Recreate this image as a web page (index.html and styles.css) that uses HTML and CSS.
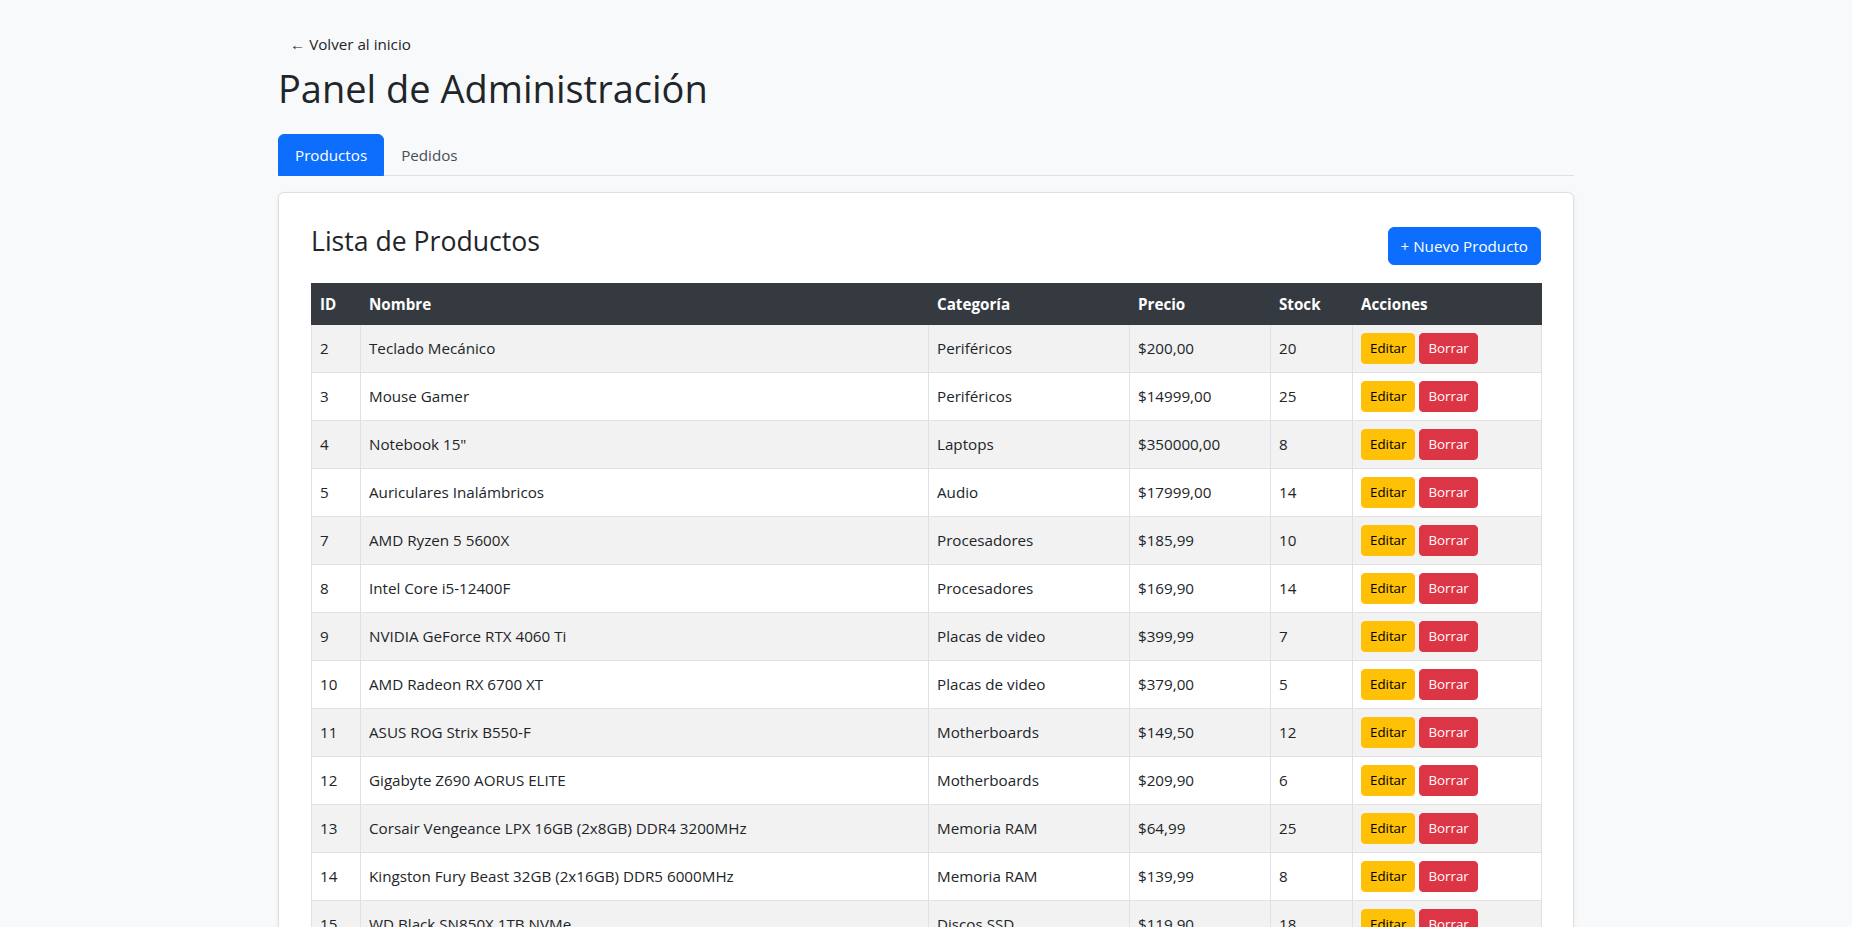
FILE: index.html
```html
<!DOCTYPE html>
<html lang="es">
<head>
<meta charset="utf-8">
<title>Panel de Administración</title>
<link rel="stylesheet" href="styles.css">
</head>
<body>
<div class="container">
  <a class="back-link" href="#">← Volver al inicio</a>
  <h1 class="page-title">Panel de Administración</h1>

  <ul class="tabs">
    <li><a class="tab active" href="#">Productos</a></li>
    <li><a class="tab" href="#">Pedidos</a></li>
  </ul>

  <div class="card">
    <div class="card-head">
      <h3 class="card-title">Lista de Productos</h3>
      <button class="btn btn-primary">+ Nuevo Producto</button>
    </div>

    <table class="table">
      <colgroup>
        <col class="c-id"><col class="c-name"><col class="c-cat"><col class="c-price"><col class="c-stock"><col class="c-act">
      </colgroup>
      <thead>
        <tr><th>ID</th><th>Nombre</th><th>Categoría</th><th>Precio</th><th>Stock</th><th>Acciones</th></tr>
      </thead>
      <tbody>
        <tr><td>2</td><td>Teclado Mecánico</td><td>Periféricos</td><td>$200,00</td><td>20</td><td><button class="btn-sm btn-warning">Editar</button><button class="btn-sm btn-danger">Borrar</button></td></tr>
        <tr><td>3</td><td>Mouse Gamer</td><td>Periféricos</td><td>$14999,00</td><td>25</td><td><button class="btn-sm btn-warning">Editar</button><button class="btn-sm btn-danger">Borrar</button></td></tr>
        <tr><td>4</td><td>Notebook 15"</td><td>Laptops</td><td>$350000,00</td><td>8</td><td><button class="btn-sm btn-warning">Editar</button><button class="btn-sm btn-danger">Borrar</button></td></tr>
        <tr><td>5</td><td>Auriculares Inalámbricos</td><td>Audio</td><td>$17999,00</td><td>14</td><td><button class="btn-sm btn-warning">Editar</button><button class="btn-sm btn-danger">Borrar</button></td></tr>
        <tr><td>7</td><td>AMD Ryzen 5 5600X</td><td>Procesadores</td><td>$185,99</td><td>10</td><td><button class="btn-sm btn-warning">Editar</button><button class="btn-sm btn-danger">Borrar</button></td></tr>
        <tr><td>8</td><td>Intel Core i5-12400F</td><td>Procesadores</td><td>$169,90</td><td>14</td><td><button class="btn-sm btn-warning">Editar</button><button class="btn-sm btn-danger">Borrar</button></td></tr>
        <tr><td>9</td><td>NVIDIA GeForce RTX 4060 Ti</td><td>Placas de video</td><td>$399,99</td><td>7</td><td><button class="btn-sm btn-warning">Editar</button><button class="btn-sm btn-danger">Borrar</button></td></tr>
        <tr><td>10</td><td>AMD Radeon RX 6700 XT</td><td>Placas de video</td><td>$379,00</td><td>5</td><td><button class="btn-sm btn-warning">Editar</button><button class="btn-sm btn-danger">Borrar</button></td></tr>
        <tr><td>11</td><td>ASUS ROG Strix B550-F</td><td>Motherboards</td><td>$149,50</td><td>12</td><td><button class="btn-sm btn-warning">Editar</button><button class="btn-sm btn-danger">Borrar</button></td></tr>
        <tr><td>12</td><td>Gigabyte Z690 AORUS ELITE</td><td>Motherboards</td><td>$209,90</td><td>6</td><td><button class="btn-sm btn-warning">Editar</button><button class="btn-sm btn-danger">Borrar</button></td></tr>
        <tr><td>13</td><td>Corsair Vengeance LPX 16GB (2x8GB) DDR4 3200MHz</td><td>Memoria RAM</td><td>$64,99</td><td>25</td><td><button class="btn-sm btn-warning">Editar</button><button class="btn-sm btn-danger">Borrar</button></td></tr>
        <tr><td>14</td><td>Kingston Fury Beast 32GB (2x16GB) DDR5 6000MHz</td><td>Memoria RAM</td><td>$139,99</td><td>8</td><td><button class="btn-sm btn-warning">Editar</button><button class="btn-sm btn-danger">Borrar</button></td></tr>
        <tr><td>15</td><td>WD Black SN850X 1TB NVMe</td><td>Discos SSD</td><td>$119,90</td><td>18</td><td><button class="btn-sm btn-warning">Editar</button><button class="btn-sm btn-danger">Borrar</button></td></tr>
      </tbody>
    </table>
  </div>
</div>
</body>
</html>
```

FILE: styles.css
```css
* { box-sizing: border-box; }

html, body {
  margin: 0;
  background: #f8f9fa;
  color: #212529;
  font-family: "Open Sans", "Noto Sans", "Liberation Sans", sans-serif;
  font-size: 15.2px;
  line-height: 24px;
}

.container {
  max-width: 1320px;
  margin: 0 auto;
  padding: 26px 12px 40px;
}

.back-link {
  display: inline-block;
  padding: 6px 12px;
  line-height: 24px;
  color: #212529;
  text-decoration: none;
  margin-bottom: 2px;
}

.page-title {
  margin: 0 0 22px;
  font-size: 38px;
  line-height: 48px;
  font-weight: 400;
  color: #212529;
}

.tabs {
  display: flex;
  list-style: none;
  margin: 0 0 16px;
  padding: 0;
  border-bottom: 1px solid #dee2e6;
}

.tab {
  display: block;
  padding: 8px 16px;
  margin-bottom: -1px;
  border: 1px solid transparent;
  border-radius: 6px 6px 0 0;
  color: #495057;
  text-decoration: none;
  line-height: 24px;
}

.tab.active {
  background: #0d6efd;
  border-color: #0d6efd;
  color: #fff;
}

.card {
  background: #fff;
  border: 1px solid rgba(0, 0, 0, 0.125);
  border-radius: 6px;
  box-shadow: 0 2px 4px rgba(0, 0, 0, 0.075);
  padding: 32px;
}

.card-head {
  display: flex;
  justify-content: space-between;
  align-items: center;
  margin-bottom: 16px;
}

.card-title {
  margin: 0 0 8px;
  font-size: 26.6px;
  line-height: 33.6px;
  font-weight: 400;
}

.btn {
  font-family: inherit;
  font-size: 15.2px;
  line-height: 24px;
  padding: 6px 12px;
  border: 1px solid transparent;
  border-radius: 6px;
  cursor: pointer;
}

.btn-primary {
  background: #0d6efd;
  border-color: #0d6efd;
  color: #fff;
}

.table {
  width: 100%;
  table-layout: fixed;
  border-collapse: collapse;
  border: 1px solid #dee2e6;
}

.c-id { width: 49px; }
.c-name { width: 568px; }
.c-cat { width: 201px; }
.c-price { width: 141px; }
.c-stock { width: 82px; }
.c-act { width: 189px; }

.table th,
.table td {
  padding: 8px;
  text-align: left;
  vertical-align: middle;
  border: 1px solid #dee2e6;
  line-height: 24px;
  white-space: nowrap;
}

.table thead th {
  background: #343a40;
  color: #fff;
  font-weight: 700;
  border-color: #343a40;
}

.table tbody tr:nth-child(odd) td {
  background: #f2f2f2;
}

.btn-sm {
  font-family: inherit;
  font-size: 13.3px;
  line-height: 21px;
  padding: 4px 8px;
  border: 1px solid transparent;
  border-radius: 4px;
  margin-right: 4px;
  vertical-align: middle;
  cursor: pointer;
}

.btn-warning {
  background: #ffc107;
  border-color: #ffc107;
  color: #000;
}

.btn-danger {
  background: #dc3545;
  border-color: #dc3545;
  color: #fff;
}
```
